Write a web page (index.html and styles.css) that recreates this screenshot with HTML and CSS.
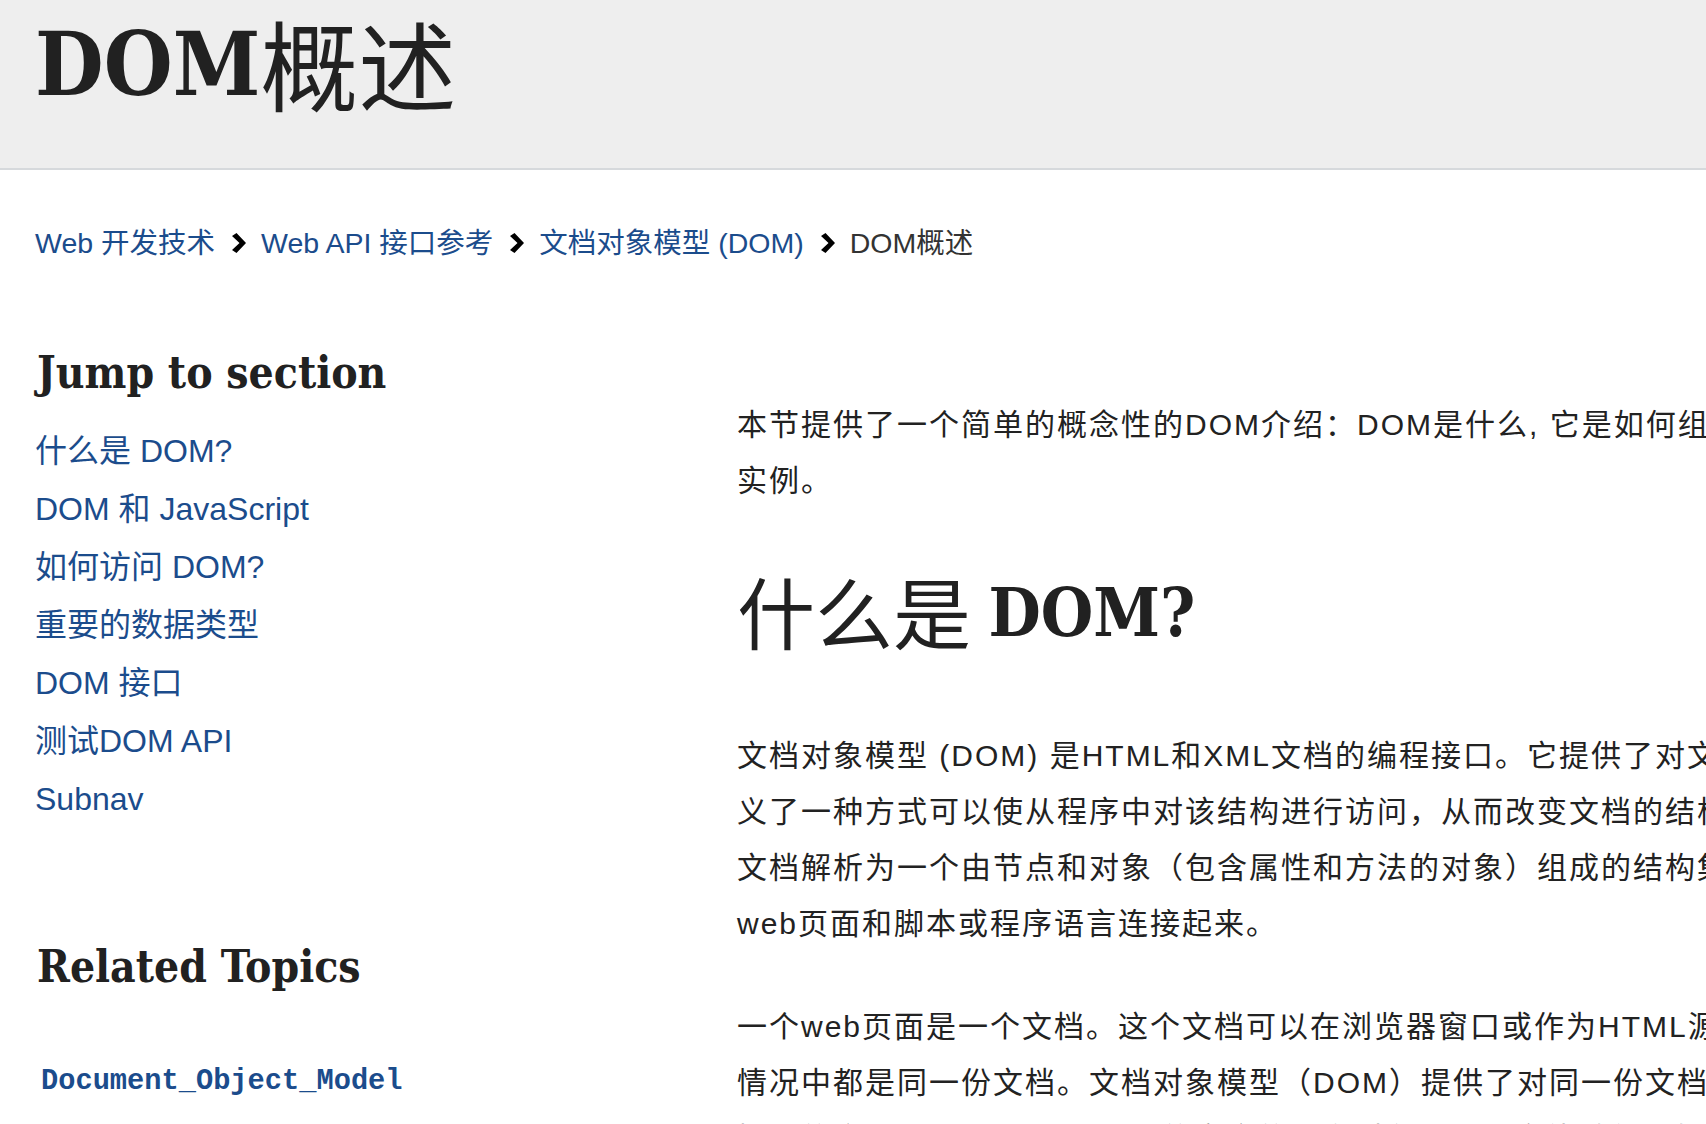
FILE: index.html
```html
<!DOCTYPE html>
<html lang="zh-CN">
<head>
<meta charset="utf-8">
<title>DOM概述</title>
<link rel="stylesheet" href="styles.css">
</head>
<body>
<header class="titlebar">
  <h1 class="page-title">DOM<span class="cjk">概述</span></h1>
</header>

<nav class="breadcrumbs" aria-label="breadcrumbs">
  <ol>
    <li><a href="#">Web 开发技术</a><svg class="sep" viewBox="0 0 15 20" width="15" height="20" aria-hidden="true"><polygon points="1,3 5.5,0 15,10 5.5,20 1,17 8.5,10"/></svg></li>
    <li><a href="#">Web API 接口参考</a><svg class="sep" viewBox="0 0 15 20" width="15" height="20" aria-hidden="true"><polygon points="1,3 5.5,0 15,10 5.5,20 1,17 8.5,10"/></svg></li>
    <li><a href="#">文档对象模型 (DOM)</a><svg class="sep" viewBox="0 0 15 20" width="15" height="20" aria-hidden="true"><polygon points="1,3 5.5,0 15,10 5.5,20 1,17 8.5,10"/></svg></li>
    <li class="current">DOM概述</li>
  </ol>
</nav>

<div class="layout">
  <aside class="sidebar">
    <h2 class="side-title">Jump to section</h2>
    <ul class="toc">
      <li><a href="#">什么是 DOM?</a></li>
      <li><a href="#">DOM 和 JavaScript</a></li>
      <li><a href="#">如何访问 DOM?</a></li>
      <li><a href="#">重要的数据类型</a></li>
      <li><a href="#">DOM 接口</a></li>
      <li><a href="#">测试DOM API</a></li>
      <li><a href="#">Subnav</a></li>
    </ul>
    <h2 class="side-title related">Related Topics</h2>
    <ul class="topics">
      <li><a href="#"><code>Document_Object_Model</code></a></li>
    </ul>
  </aside>

  <main class="article">
    <p class="intro">本节提供了一个简单的概念性的DOM介绍：DOM是什么, 它是如何组织的, 如何访问它, 以及实例。</p>
    <h2 class="section-title"><span class="cjk">什么是 </span>DOM?</h2>
    <p>文档对象模型 (DOM) 是HTML和XML文档的编程接口。它提供了对文档结构化的表述，并定义了一种方式可以使从程序中对该结构进行访问，从而改变文档的结构，样式和内容。它会将文档解析为一个由节点和对象（包含属性和方法的对象）组成的结构集合。简言之，它就会将web页面和脚本或程序语言连接起来。</p>
    <p>一个web页面是一个文档。这个文档可以在浏览器窗口或作为HTML源码显示出来。上述两个情况中都是同一份文档。文档对象模型（DOM）提供了对同一份文档的另一种表现，存储和操作的方式。DOM是web页面的完全的面向对象表述，它能够使用如JavaScript等脚本语言进行修改。</p>
  </main>
</div>
</body>
</html>
```

FILE: styles.css
```css
html {
  overflow: hidden;
}

body {
  margin: 0;
  background: #ffffff;
  color: #222222;
  font-family: "Liberation Sans", "Noto Sans CJK SC", sans-serif;
  text-autospace: no-autospace;
  text-spacing-trim: space-all;
}

a {
  color: #1b4c8c;
  text-decoration: none;
}

/* ---------- title bar ---------- */
.titlebar {
  box-sizing: border-box;
  height: 170px;
  padding: 20px 0 0 35px;
  background: #eeeeee;
  border-bottom: 2px solid #d6d9dc;
}

.page-title {
  margin: 0;
  font-family: "DejaVu Serif Condensed", "DejaVu Serif", "Noto Sans CJK SC", serif;
  font-weight: 700;
  font-size: 88px;
  line-height: 1;
  color: #212121;
  white-space: nowrap;
}

.page-title .cjk {
  font-family: "Noto Sans CJK SC", sans-serif;
  font-weight: 400;
  font-size: 98px;
  line-height: 0;
  vertical-align: -9px;
}

/* ---------- breadcrumbs ---------- */
.breadcrumbs {
  margin-top: 53px;
  padding-left: 35px;
  font-size: 28.5px;
  line-height: 40px;
}

.breadcrumbs ol {
  display: flex;
  align-items: baseline;
  margin: 0;
  padding: 0;
  list-style: none;
  white-space: nowrap;
}

.breadcrumbs li {
  display: flex;
  align-items: baseline;
}

.breadcrumbs .sep {
  margin: 0 15px 0 16px;
  fill: #000000;
}

.breadcrumbs .current {
  color: #333333;
}

/* ---------- layout ---------- */
.layout {
  display: grid;
  grid-template-columns: 642px 1320px;
  column-gap: 60px;
  align-items: start;
  padding: 84px 0 0 35px;
}

/* ---------- sidebar ---------- */
.side-title {
  margin: 0 0 23px 2px;
  font-family: "DejaVu Serif Condensed", "DejaVu Serif", serif;
  font-weight: 700;
  font-size: 44px;
  line-height: 52px;
  color: #212121;
}

.side-title.related {
  margin-top: 113px;
  margin-bottom: 0;
}

.toc {
  margin: 0;
  padding: 0;
  list-style: none;
  font-size: 32px;
  line-height: 58px;
}

.topics {
  margin: 69px 0 0;
  padding: 0 0 0 6px;
  list-style: none;
}

.topics code {
  font-family: "Liberation Mono", monospace;
  font-weight: 700;
  font-size: 28.7px;
  line-height: 40px;
}

/* ---------- article ---------- */
.article p {
  margin: 47px 0 0;
  font-size: 30px;
  line-height: 56px;
  letter-spacing: 2px;
  color: #222222;
}

.article .intro {
  margin-top: 50px;
}

.section-title {
  margin: 68px 0 80px;
  font-family: "DejaVu Serif Condensed", "DejaVu Serif", serif;
  font-weight: 700;
  font-size: 67px;
  line-height: 71px;
  color: #212121;
  white-space: nowrap;
}

.section-title .cjk {
  font-family: "Noto Sans CJK SC", sans-serif;
  font-weight: 400;
  font-size: 78px;
  line-height: 0;
  vertical-align: -8px;
}

.section-title + p {
  margin-top: 0;
}
```
